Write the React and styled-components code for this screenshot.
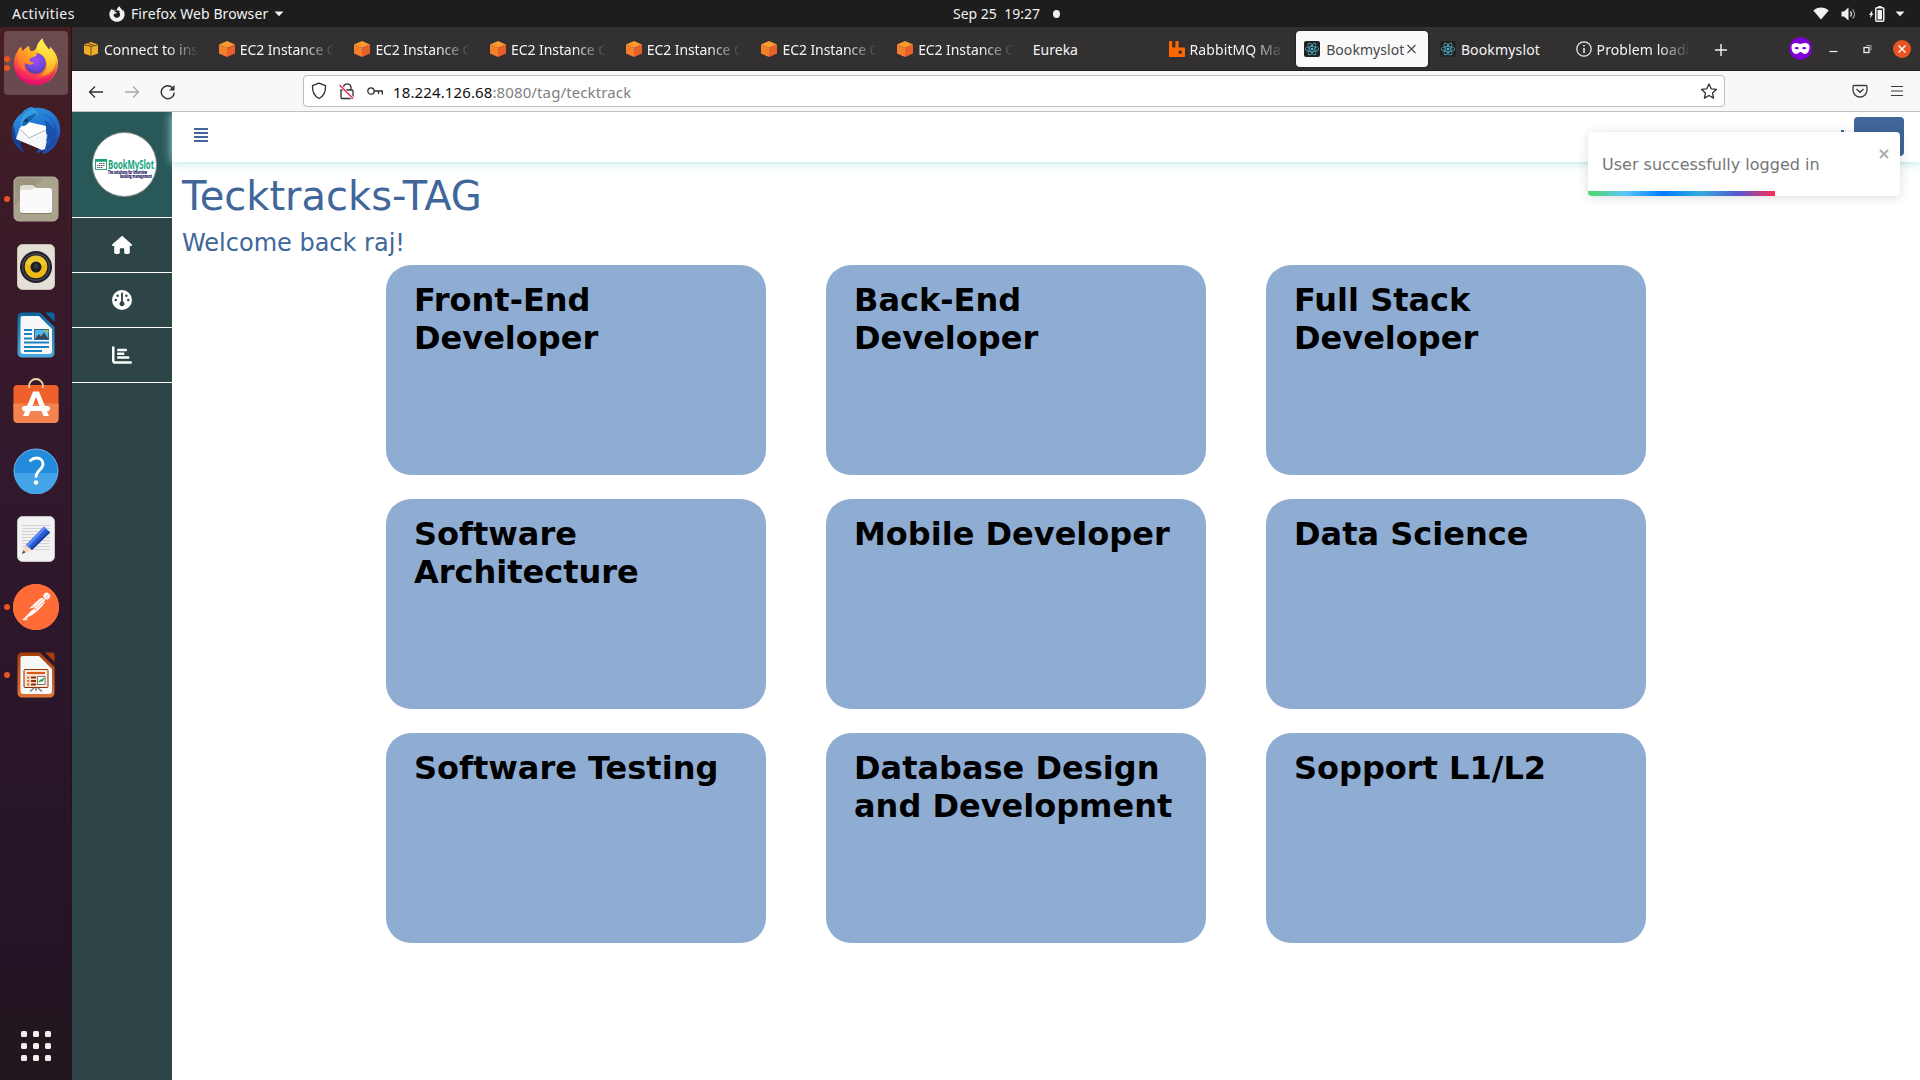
import React from "react";
import styled, { createGlobalStyle, css } from "styled-components";
import { FaHouse, FaGauge, FaChartBar, FaFirefoxBrowser } from "react-icons/fa6";
import { SiPostman, SiRabbitmq, SiReact } from "react-icons/si";

const GlobalStyle = createGlobalStyle`
  * { box-sizing: border-box; }
  body { margin: 0; background: #fff; overflow: hidden; }
  h1, h2, h4, p { margin: 0; }
  svg { display: block; flex: none; }
`;

const uiFont = `"Noto Sans", "Open Sans", sans-serif`;

const Desktop = styled.div`
  width: 1920px;
  height: 1080px;
  display: flex;
  flex-direction: column;
  font-family: ${uiFont};
`;

/* ---------- GNOME top bar ---------- */
const TopBar = styled.header`
  height: 27px;
  flex: none;
  background: #1d1d1d;
  color: #f2f2f2;
  display: grid;
  grid-template-columns: 1fr auto 1fr;
  align-items: center;
  font-size: 14px;
  line-height: 27px;
`;
const TopLeft = styled.div`
  display: flex;
  align-items: center;
  padding-left: 12px;
`;
const TopLabel = styled.span`
  width: ${(p) => p.$w}px;
  letter-spacing: ${(p) => p.$ls || 0}px;
  white-space: nowrap;
`;
const AppMenu = styled.div`
  display: flex;
  align-items: center;
  gap: 6px;
  margin-left: 35px;
`;
const Clock = styled.div`
  display: flex;
  align-items: center;
  gap: 13px;
  padding-left: 93px;
  white-space: pre;
  width: 200px;
`;
const Dot = styled.i`
  width: 8px;
  height: 8px;
  border-radius: 50%;
  background: #f2f2f2;
`;
const Tray = styled.div`
  display: flex;
  align-items: center;
  justify-content: flex-end;
  padding-right: 15px;
`;
const TrayItem = styled.span`
  margin-left: ${(p) => p.$gap}px;
`;

/* ---------- Dock ---------- */
const Body = styled.div`
  flex: 1;
  min-height: 0;
  display: flex;
`;
const Dock = styled.nav`
  width: 72px;
  flex: none;
  padding: 4px 0 2px;
  display: flex;
  flex-direction: column;
  gap: 4px;
  align-items: center;
  background: linear-gradient(180deg, #471e22 0%, #3c1b27 16%, #33182c 38%, #2a162a 65%, #241426 88%, #22161f 95%, #22161f 100%);
  border-right: 1px solid #25121c;
`;
const DockTile = styled.div`
  width: 64px;
  height: 64px;
  flex: none;
  border-radius: 4px;
  display: flex;
  align-items: center;
  justify-content: center;
  position: relative;
  background: ${(p) => (p.$active ? "rgba(255,255,255,0.2)" : "transparent")};
  padding-bottom: ${(p) => p.$lift || 0}px;
`;
const Running = styled.div`
  position: absolute;
  left: 0;
  top: 0;
  height: 100%;
  display: flex;
  flex-direction: column;
  justify-content: center;
  gap: 3px;
`;
const RunDot = styled.i`
  width: 6px;
  height: 6px;
  border-radius: 50%;
  background: #e95420;
`;
const DockSpacer = styled.div`
  flex: 1;
`;
const PostmanBadge = styled.div`
  width: 46px;
  height: 46px;
  border-radius: 50%;
  background: #fff;
  color: #ff6c37;
  border: 1px solid #ff6c37;
  display: flex;
  align-items: center;
  justify-content: center;
`;

/* ---------- Browser chrome ---------- */
const Window = styled.div`
  flex: 1;
  min-width: 0;
  display: flex;
  flex-direction: column;
`;
const TabBar = styled.div`
  height: 44px;
  flex: none;
  background: #333032;
  border-bottom: 1px solid #1f1d1e;
  display: flex;
  align-items: center;
  padding: 0 9px 0 1px;
`;
const Tab = styled.div`
  width: 131.7px;
  height: 36px;
  margin: 0 2px;
  flex: none;
  display: flex;
  align-items: center;
  padding: 0 8px;
  border-radius: 4px;
  color: #f4f4f4;
  font-size: 14px;
  ${(p) =>
    p.$active &&
    css`
      background: #f9f9fa;
      color: #48474a;
      box-shadow: 0 0 3px rgba(0, 0, 0, 0.6);
    `}
`;
const TabIcon = styled.span`
  width: 16px;
  height: 16px;
  margin-right: ${(p) => (p.$active ? 6 : 5)}px;
  flex: none;
  display: flex;
  align-items: center;
  justify-content: center;
`;
const ReactTile = styled.span`
  width: 16px;
  height: 16px;
  border-radius: 2px;
  background: #222;
  color: #53c1de;
  display: flex;
  align-items: center;
  justify-content: center;
`;
const TabLabel = styled.span`
  flex: 1;
  min-width: 0;
  white-space: nowrap;
  line-height: 20px;
  padding-top: 2px;
  letter-spacing: ${(p) => p.$ls || 0}px;
  ${(p) =>
    p.$fade &&
    css`
      mask-image: linear-gradient(90deg, #000 0, #000 calc(100% - 32px), transparent 100%);
    `}
`;
const NewTab = styled.span`
  padding: 2px 0 0 12px;
`;
const WindowControls = styled.div`
  margin-left: auto;
  display: flex;
  align-items: center;
`;
const CloseButton = styled.span`
  width: 18px;
  height: 18px;
  border-radius: 50%;
  background: #e95420;
  display: flex;
  align-items: center;
  justify-content: center;
  margin-left: 18px;
`;
const Toolbar = styled.div`
  height: 41px;
  flex: none;
  background: #f8f8f8;
  border-bottom: 1px solid #c2c2c3;
  display: flex;
  align-items: center;
  padding: 0 16px;
  color: #3a393b;
`;
const NavButtons = styled.div`
  display: flex;
  gap: 20px;
  width: 215px;
  padding-top: 1px;
`;
const UrlBox = styled.div`
  width: 1422px;
  height: 32px;
  background: #fff;
  border: 1px solid #bdbdbf;
  border-radius: 4px;
  display: flex;
  align-items: center;
  padding: 0 6px 0 7px;
  font-size: 15px;
`;
const Url = styled.span`
  margin-left: 9px;
  flex: 1;
  color: #808081;
  line-height: 20px;
  padding-top: 1px;
  letter-spacing: 0.12px;
`;
const Host = styled.span`
  color: #111;
`;
const ToolbarEnd = styled.div`
  margin-left: auto;
  display: flex;
  align-items: center;
  gap: 22px;
`;

/* ---------- Page ---------- */
const Page = styled.div`
  flex: 1;
  min-height: 0;
  display: flex;
  overflow: hidden;
  position: relative;
  font-family: "DejaVu Sans", sans-serif;
`;
const Sidebar = styled.aside`
  width: 100px;
  flex: none;
  background: #2d4546;
`;
const LogoBox = styled.div`
  height: 106px;
  background: #285858;
  border-bottom: 1px solid #fff;
  padding: 20px 0 0 20px;
`;
const SideItem = styled.div`
  height: 55px;
  border-bottom: 1px solid #fff;
  color: #fff;
  display: flex;
  align-items: center;
  justify-content: center;
  font-size: 20px;
`;
const Main = styled.main`
  flex: 1;
  min-width: 0;
`;
const Header = styled.div`
  height: 50px;
  background: #fff;
  box-shadow: 0 0 10px #a3dfdd;
  position: relative;
  display: flex;
  justify-content: space-between;
  padding: 5px 16px 0 22px;
`;
const MenuIcon = styled.div`
  padding-top: 11px;
`;
const HeaderRight = styled.div`
  display: flex;
  gap: 10px;
`;
const NameMark = styled.i`
  width: 3px;
  height: 3px;
  margin-top: 13px;
  background: #40669a;
`;
const HeaderButton = styled.div`
  width: 50px;
  height: 39px;
  border-radius: 4px;
  background: #40669a;
`;
const Titles = styled.div`
  padding: 10px 10px 0;
  color: #40669a;
`;
const Title = styled.h1`
  font-size: 40px;
  line-height: 48px;
  font-weight: 400;
`;
const Welcome = styled.h4`
  margin-top: 9px;
  font-size: 24px;
  line-height: 29px;
  font-weight: 400;
`;
const Grid = styled.div`
  display: grid;
  grid-template-columns: repeat(3, 380px);
  grid-auto-rows: 210px;
  gap: 24px 60px;
  padding: 7px 0 0 214px;
`;
const Card = styled.section`
  background: #8facd3;
  border-radius: 25px;
  padding: 16px 25px 16px 28px;
`;
const CardTitle = styled.h2`
  font-size: 32px;
  line-height: 38px;
  font-weight: 700;
  color: #000;
`;
const Toast = styled.div`
  position: absolute;
  top: 20px;
  right: 20px;
  width: 312px;
  height: 64px;
  background: #fff;
  border-radius: 4px;
  overflow: hidden;
  display: flex;
  justify-content: space-between;
  padding: 0 10px 0 14px;
  color: #757575;
  font-size: 16px;
  line-height: 66px;
  box-shadow: 0 1px 10px rgba(0, 0, 0, 0.1), 0 2px 15px rgba(0, 0, 0, 0.05);
`;
const ToastClose = styled.span`
  padding-top: 17px;
`;
const Progress = styled.div`
  position: absolute;
  left: 0;
  bottom: 0;
  width: 187px;
  height: 5px;
  background: linear-gradient(90deg, #4cd964, #5ac8fa, #007aff, #34aadc, #5856d6, #ff2d55);
`;

/* ---------- Drawings ---------- */
const Caret = () => (
  <svg width="10" height="6" viewBox="0 0 10 6"><path d="M0.5 0.5h9L5 5.3z" fill="#f2f2f2" /></svg>
);

const FirefoxIcon = () => (
  <svg width="46" height="48" viewBox="0 0 46 48">
    <defs>
      <linearGradient id="fxBody" x1="0.75" y1="0.05" x2="0.3" y2="0.95">
        <stop offset="0" stopColor="#fff04a" />
        <stop offset="0.3" stopColor="#ffc42c" />
        <stop offset="0.52" stopColor="#ff8a27" />
        <stop offset="0.75" stopColor="#ff4448" />
        <stop offset="1" stopColor="#e5126f" />
      </linearGradient>
      <linearGradient id="fxHead" x1="0.8" y1="0" x2="0.2" y2="1">
        <stop offset="0" stopColor="#ffc928" />
        <stop offset="0.5" stopColor="#ff9225" />
        <stop offset="1" stopColor="#ff5d35" />
      </linearGradient>
      <radialGradient id="fxGlobe" cx="0.5" cy="0.35" r="0.7">
        <stop offset="0" stopColor="#a24df5" />
        <stop offset="0.6" stopColor="#6d48dc" />
        <stop offset="1" stopColor="#4b3b9f" />
      </radialGradient>
      <linearGradient id="fxTail" x1="0.6" y1="0" x2="0.5" y2="1">
        <stop offset="0" stopColor="#fff45c" />
        <stop offset="0.55" stopColor="#ffd432" />
        <stop offset="1" stopColor="#ff9c23" />
      </linearGradient>
    </defs>
    <path d="M23 10.500c2-4 3.500-7.500 6.500-10 .5 4 4 7 6.500 11 .8-.5 1-1.500 1-3 5 5 8.500 11 8 18C44 39 34 47 23 47 11 47 1.500 38 1 27c-.2-6 1-11 4-14 .5-1.500 1.500-3 3-4 .3 2 1 3 2 4 1.500-2.200 3.500-4 6-5 0 2 .5 4 2 5 1.500.3 3.500 0 5-2.500z" fill="url(#fxBody)" />
    <path d="M1 27c3 14 16 18 27 13 8-3 13-8 15-17l2 4C44 39 34 47 23 47 11 47 1.500 38 1 27z" fill="#e51572" opacity="0.3" />
    <path d="M2 31c4 10 14 13 23 11 9-1 15-6 18-12-2 10-10 17-20 17C13 47 4 41 2 31z" fill="#dd0f70" opacity="0.6" />
    <circle cx="22.500" cy="25.500" r="10.500" fill="url(#fxGlobe)" />
    <path d="M29.500.5c-5 4-8 10-3.500 14 4 3 8 5 8 12 0 6-3 9-7 11 9 0 15-6 15.500-13 .3-5-1.500-8-4.500-12 0 1-.5 2-1.500 2C35 9 30 6 29.500.5z" fill="url(#fxTail)" />
    <path d="M5 14c0-2 1-4 3-5l2 5c1-2.500 3-4.500 6-6 0 2 .5 5 3 6.500 2 .5 3 .3 4.500.8.8 1.200 0 2.500-2 3.500-2 .8-4 1-5 2 0 3 2 4 5 4-3 3-8 2-10 0-1 3 0 7 2 9-6-2-9-6-9-13z" fill="url(#fxHead)" />
  </svg>
);

const ThunderbirdIcon = () => (
  <svg width="50" height="50" viewBox="0 0 50 50">
    <defs>
      <linearGradient id="tbBlue" x1="0.3" y1="0" x2="0.7" y2="1">
        <stop offset="0" stopColor="#2f93df" />
        <stop offset="0.5" stopColor="#1f6fd0" />
        <stop offset="1" stopColor="#2447a8" />
      </linearGradient>
    </defs>
    <path d="M20 1c2 0 3 1 4 1 10-1 19 4 23 12 3 7 3 14 0 20-2 6-7 11-13 14l-3-1 3-3-8 3c-2 0 2-4 4-6L9 35c0 4 2 8 4 11C5 42 1 34 1 26c0-8 4-15 10-19 2-3 5-5 9-6z" fill="url(#tbBlue)" />
    <path d="M1 25c0 10 4 17 12 21-2-3-4-7-4-11L5 32 3 20c-1 1-2 3-2 5z" fill="#173f97" />
    <path d="M8 24l26 3 3 2-3 14-3 1L5 33z" fill="#f5f6f8" />
    <path d="M13 15l22 5v9l-18 3L8 24z" fill="#fff" />
    <path d="M8 22l10 10 17-8" fill="none" stroke="#a9b1ba" strokeWidth="1" />
    <path d="M9 20c0-8 5-15 13-17 3 1 5 2 5 5-3 2-7 4-9 7-2 4-5 6-9 5z" fill="#369ee0" />
    <path d="M11 19c2-7 6-9 15-12-3 4-5 6-8 9-2 3-4 4-7 3z" fill="#1764a5" />
    <circle cx="15" cy="14.500" r="1.500" fill="#102e50" />
    <path d="M27 7c9 1 16 7 17 17-3-5-7-8-11-10 2 5 4 13 2 21 3-1 4-2 6-4-1 6-4 10-7 13 7-2 12-7 14-14-1 1-2 2-3 2 2-7 0-14-4-18-3-4-8-7-14-7z" fill="#174aa3" opacity="0.7" />
  </svg>
);

const FilesIcon = () => (
  <svg width="46" height="46" viewBox="0 0 46 46">
    <rect x="1" y="1" width="44" height="44" rx="5" fill="#9c9581" stroke="#b9b4a2" />
    <path d="M1 30L32 1h8a5 5 0 0 1 5 5v34a5 5 0 0 1-5 5H6a5 5 0 0 1-5-5z" fill="#aaa48f" />
    <path d="M7 12a3 3 0 0 1 3-3h9c2 0 3 3 5 3h12v10H7z" fill="#e1ddcf" />
    <path d="M7 16a2 2 0 0 1 2-2h8c2 0 3-2 5-2h14a3 3 0 0 1 3 3v19a3 3 0 0 1-3 3H10a3 3 0 0 1-3-3z" fill="#fafafa" />
    <path d="M8 37.500h30" stroke="#857e6c" strokeWidth="1" />
  </svg>
);

const SpeakerIcon = () => (
  <svg width="38" height="46" viewBox="0 0 38 46">
    <rect x="0.500" y="0.500" width="37" height="45" rx="5" fill="#e5e0d5" stroke="#c9c3b6" />
    <circle cx="19" cy="23" r="16" fill="#20202c" />
    <circle cx="19" cy="23" r="14" fill="#454553" />
    <circle cx="19" cy="23" r="12.500" fill="#171719" />
    <circle cx="19" cy="23" r="11.300" fill="#ecba16" />
    <path d="M8 20a11.300 11.300 0 0 1 22 0L19 23z" fill="#f5d142" opacity="0.65" />
    <circle cx="19" cy="23" r="5.500" fill="#1c1f22" />
    <circle cx="19" cy="22" r="2.500" fill="#36393c" />
  </svg>
);

const DocShell = ({ id, dark, light, children }) => (
  <svg width="38" height="46" viewBox="0 0 38 46">
    <defs>
      <linearGradient id={id} x1="0" y1="0" x2="0" y2="1">
        <stop offset="0" stopColor={dark} />
        <stop offset="1" stopColor={light} />
      </linearGradient>
    </defs>
    <path d="M5 .5h18L37.500 15v26a4.500 4.500 0 0 1-4.500 4.500H5A4.500 4.500 0 0 1 .5 41V5A4.500 4.500 0 0 1 5 .5z" fill={`url(#${id})`} />
    <path d="M28 .5h7.500a2 2 0 0 1 2 2V10z" fill={dark} />
    <path d="M5.500 4H22l13 13v22a3 3 0 0 1-3 3H6.500a3 3 0 0 1-3-3V6a2 2 0 0 1 2-2z" fill="#f8f8f8" />
    {children}
  </svg>
);

const WriterIcon = () => (
  <DocShell id="wr" dark="#0d639d" light="#4aa9dc">
    <path d="M7 18h8M7 22h8M7 26.500h8M7 30.500h25M7 35h25M7 39h18" stroke="#1a82c4" strokeWidth="1.800" />
    <rect x="17.500" y="17.500" width="14" height="10" fill="#53b5e5" stroke="#226aa0" />
    <path d="M18 27l4-5 2 2.500 3-4 4.500 6.500z" fill="#3c4650" />
    <path d="M27.500 18h4v3z" fill="#e9b620" />
  </DocShell>
);

const ImpressIcon = () => (
  <DocShell id="im" dark="#a53e0b" light="#e07337">
    <rect x="7" y="17.500" width="24" height="18" rx="1" fill="#fbe3d3" stroke="#8d3306" />
    <path d="M10 21h18" stroke="#d9591b" strokeWidth="2" />
    <path d="M10 25.500h2.500M10 29h2.500M10 32.500h2.500" stroke="#e07337" strokeWidth="2" />
    <path d="M14 25.500h5M14 29h5M14 32.500h5" stroke="#8d2f05" strokeWidth="2" />
    <rect x="20.500" y="24.500" width="7.500" height="8" fill="#fff" stroke="#7b7b7b" />
    <path d="M22 30l2-2 1 1 2-3" stroke="#2f9e3c" strokeWidth="1.500" fill="none" />
    <path d="M17 36l-4 3.500M21 36l4 3.500M19 36v3" stroke="#7d7d7d" strokeWidth="1.500" />
  </DocShell>
);

const SoftwareIcon = () => (
  <svg width="46" height="46" viewBox="0 0 46 46">
    <rect x="0.500" y="7" width="45" height="37.500" rx="4" fill="#f0602a" />
    <path d="M.5 25.500h45V41a4 4 0 0 1-4 4h-37a4 4 0 0 1-4-4z" fill="#f38450" />
    <path d="M16 10V8a7 7 0 0 1 14 0v2" fill="none" stroke="#f3d9a8" strokeWidth="1.800" />
    <path d="M20 13.500h6L36 38h-5.500L23 19l-7.500 19H10z" fill="#fff" />
    <rect x="9" y="28" width="28" height="5" rx="2.500" fill="#fff" />
  </svg>
);

const HelpIcon = () => (
  <svg width="46" height="46" viewBox="0 0 46 46">
    <circle cx="23" cy="23" r="22" fill="#238bdb" stroke="#6fbaf0" />
    <path d="M1.500 25h43a21.500 21.500 0 0 1-43 0z" fill="#43a3e6" />
    <path d="M17.500 12.500c2-2 4-2.500 6-2.500 4 0 6.500 2.500 6.500 6 0 6-7 6.500-7 12.500" fill="none" stroke="#fff" strokeWidth="2.800" strokeLinecap="round" />
    <circle cx="23" cy="34.500" r="2.300" fill="#fff" />
  </svg>
);

const EditorIcon = () => (
  <svg width="38" height="46" viewBox="0 0 38 46">
    <rect x="0.500" y="0.500" width="37" height="45" rx="5" fill="#f2f2f2" stroke="#c6c6c6" />
    <path d="M5 9.500h28M5 12.500h28M5 15.500h28M5 18.500h28M5 21.500h28M5 24.500h28M5 27.500h28M5 30.500h28M5 33.500h28" stroke="#d2d2d2" />
    <path d="M5 38l4-9 6 5z" fill="#f7d9b4" />
    <path d="M5 38l1.500-3.500 2 1.800z" fill="#333" />
    <path d="M9 29L27 10.500l6 6L15 34z" fill="#2a5bd8" />
    <path d="M9 29L27 10.500l2 2L11 31z" fill="#5d8cf0" />
    <path d="M13.500 32.500L31.500 15l1.500 1.500L15 34z" fill="#1c419f" />
  </svg>
);

const AppsIcon = () => (
  <svg width="30" height="30" viewBox="0 0 30 30" fill="#f1f0ee">
    {[0, 12, 24].flatMap((y) => [0, 12, 24].map((x) => <rect key={`${x}-${y}`} x={x} y={y} width="6" height="6" rx="1.500" />))}
  </svg>
);

const AwsBox = () => (
  <svg width="14" height="14" viewBox="0 0 14 14">
    <path d="M0 2.500L7 0l7 2.500v9L7 14l-7-2.500z" fill="#efac28" />
    <path d="M0 2.800l7 1.700 7-1.700M7 4.500V14M3.500 1.500l7 2" stroke="#59431b" strokeWidth="0.900" fill="none" />
  </svg>
);

const Ec2Cube = () => (
  <svg width="16" height="16" viewBox="0 0 16 16">
    <path d="M8 0l8 3.500L8 7 0 3.500z" fill="#fb9a2e" />
    <path d="M0 3.500L8 7v9l-8-3.500z" fill="#f5802a" />
    <path d="M16 3.500L8 7v9l8-3.500z" fill="#e8602a" />
  </svg>
);

const InfoCircle = () => (
  <svg width="16" height="16" viewBox="0 0 16 16" fill="none" stroke="#f4f4f4">
    <circle cx="8" cy="8" r="7.200" strokeWidth="1.200" />
    <path d="M8 7v5M8 4v1.500" strokeWidth="1.500" />
  </svg>
);

const LogoIcon = () => (
  <svg width="65" height="65" viewBox="0 0 65 65">
    <circle cx="32.500" cy="32.500" r="32" fill="#fff" stroke="#8f8f8f" />
    <rect x="3.500" y="27.500" width="11" height="10" fill="#fff" stroke="#2ba27f" />
    <path d="M3 28.500h12" stroke="#11a07a" strokeWidth="2.500" />
    <path d="M7 31.500h6M5 33.500h8M5 35.500h6" stroke="#5c5c66" strokeWidth="1.200" strokeDasharray="1.500 0.500" />
    <text x="16" y="37" fontFamily="Open Sans, sans-serif" fontWeight="700" fontSize="12.500" fill="#14a37c" textLength="46" lengthAdjust="spacingAndGlyphs">BookMySlot</text>
    <text x="16" y="41.500" fontFamily="Open Sans, sans-serif" fontWeight="700" fontSize="4.500" fill="#1c1c66" stroke="#1c1c66" strokeWidth="0.200" textLength="39" lengthAdjust="spacingAndGlyphs">The solutions for interview</text>
    <text x="28" y="45.800" fontFamily="Open Sans, sans-serif" fontWeight="700" fontSize="4.500" fill="#1c1c66" stroke="#1c1c66" strokeWidth="0.200" textLength="32" lengthAdjust="spacingAndGlyphs">booking management</text>
  </svg>
);

const WifiIcon = () => (
  <svg width="16" height="13" viewBox="0 0 16 13"><path d="M.3 3.500C4.500-.4 11.500-.4 15.700 3.500L8 12.500z" fill="#f2f2f2" /></svg>
);
const VolumeIcon = () => (
  <svg width="16" height="14" viewBox="0 0 16 14">
    <path d="M.5 4.500H3L7.500.5v13L3 9.500H.5z" fill="#f2f2f2" />
    <path d="M9.300 4.500a3.500 3.500 0 0 1 0 5" stroke="#f2f2f2" fill="none" strokeWidth="1.200" />
    <path d="M11.500 2.500a6 6 0 0 1 0 9" stroke="#9b9b9b" fill="none" strokeWidth="1.200" />
  </svg>
);
const BatteryIcon = () => (
  <svg width="16" height="16" viewBox="0 0 16 16">
    <path d="M3.500 4L0 9h1.800L1 12.500 4.500 7.500H2.800z" fill="#f2f2f2" />
    <rect x="6.750" y="1.750" width="8" height="13.500" rx="1" fill="none" stroke="#f2f2f2" strokeWidth="1.500" />
    <rect x="9" y="0" width="3.500" height="2" fill="#f2f2f2" />
    <rect x="8.500" y="4" width="4.500" height="9.500" fill="#f2f2f2" />
  </svg>
);

const MaskIcon = () => (
  <svg width="23" height="23" viewBox="0 0 23 23">
    <circle cx="11.500" cy="11.500" r="11.300" fill="#8000d7" />
    <path d="M2.500 10c0-3 2-4 4.500-4 2 0 3 .9 4.500.9S14 6 16 6c2.500 0 4.500 1 4.500 4 0 4-2 7-4.500 7-2 0-3-2-4.500-2s-2.500 2-4.500 2c-2.500 0-4.500-3-4.500-7z" fill="#fff" />
    <path d="M5.500 11.200c1-1.700 3.500-1.700 4.500 0-1 1.500-3.500 1.500-4.500 0zM13 11.200c1-1.700 3.500-1.700 4.500 0-1 1.500-3.500 1.500-4.500 0z" fill="#8000d7" />
  </svg>
);

const dockItems = [
  { icon: <FirefoxIcon />, dots: 2, active: true, lift: 2 },
  { icon: <ThunderbirdIcon /> },
  { icon: <FilesIcon />, dots: 1 },
  { icon: <SpeakerIcon /> },
  { icon: <WriterIcon /> },
  { icon: <SoftwareIcon />, lift: 4 },
  { icon: <HelpIcon /> },
  { icon: <EditorIcon /> },
  { icon: <PostmanBadge><SiPostman size={46} /></PostmanBadge>, dots: 1 },
  { icon: <ImpressIcon />, dots: 1 },
];

const reactTile = <ReactTile><SiReact size={14} /></ReactTile>;
const ec2 = { icon: <Ec2Cube />, label: "EC2 Instance C", fade: true, ls: -0.08 };
const tabs = [
  { icon: <AwsBox />, label: "Connect to ins", fade: true },
  ec2, ec2, ec2, ec2, ec2, ec2,
  { label: "Eureka" },
  { icon: <SiRabbitmq size={16} color="#ff6600" />, label: "RabbitMQ Ma", fade: true, ls: 0.1 },
  { icon: reactTile, label: "Bookmyslot", active: true, ls: 0.05 },
  { icon: reactTile, label: "Bookmyslot", ls: 0.15 },
  { icon: <InfoCircle />, label: "Problem loadi", fade: true, ls: 0.1 },
];

const cards = [
  "Front-End Developer", "Back-End Developer", "Full Stack Developer",
  "Software Architecture", "Mobile Developer", "Data Science",
  "Software Testing", "Database Design and Development", "Sopport L1/L2",
];

export default function App() {
  return (
    <Desktop>
      <GlobalStyle />
      <TopBar>
        <TopLeft>
          <TopLabel $w={62} $ls={0.45}>Activities</TopLabel>
          <AppMenu>
            <FaFirefoxBrowser size={16} />
            <TopLabel $w={137} $ls={0.1}>Firefox Web Browser</TopLabel>
            <Caret />
          </AppMenu>
        </TopLeft>
        <Clock>{"Sep 25  19:27"}<Dot /></Clock>
        <Tray>
          <TrayItem><WifiIcon /></TrayItem>
          <TrayItem $gap={12}><VolumeIcon /></TrayItem>
          <TrayItem $gap={12}><BatteryIcon /></TrayItem>
          <TrayItem $gap={10}><Caret /></TrayItem>
        </Tray>
      </TopBar>
      <Body>
        <Dock>
          {dockItems.map((d, i) => (
            <DockTile key={i} $active={d.active} $lift={d.lift}>
              <Running>{Array.from({ length: d.dots || 0 }, (_, k) => <RunDot key={k} />)}</Running>
              {d.icon}
            </DockTile>
          ))}
          <DockSpacer />
          <DockTile><AppsIcon /></DockTile>
        </Dock>
        <Window>
          <TabBar>
            {tabs.map((t, i) => (
              <Tab key={i} $active={t.active}>
                {t.icon && <TabIcon $active={t.active}>{t.icon}</TabIcon>}
                <TabLabel $fade={t.fade} $ls={t.ls}>{t.label}</TabLabel>
                {t.active && (
                  <svg width="14" height="12" viewBox="0 0 14 12"><path d="M1.500 2l8 8M9.500 2l-8 8" stroke="#48474a" strokeWidth="1.100" /></svg>
                )}
              </Tab>
            ))}
            <NewTab>
              <svg width="16" height="16" viewBox="0 0 16 16"><path d="M8 2v12M2 8h12" stroke="#f4f4f4" strokeWidth="1.400" /></svg>
            </NewTab>
            <WindowControls>
              <MaskIcon />
              <svg width="63" height="16" viewBox="0 0 63 16" fill="none">
                <path d="M17.500 10.500h8" stroke="#f2f2f2" strokeWidth="1.200" />
                <rect x="52" y="6.500" width="5" height="5" stroke="#f2f2f2" strokeWidth="1.300" />
                <path d="M54.500 4.500h4.500v5" stroke="#a5a4a5" />
              </svg>
              <CloseButton>
                <svg width="10" height="10" viewBox="0 0 10 10"><path d="M1.500 1.500l7 7M8.500 1.500l-7 7" stroke="#fff" strokeWidth="1.400" /></svg>
              </CloseButton>
            </WindowControls>
          </TabBar>
          <Toolbar>
            <NavButtons>
              <svg width="16" height="16" viewBox="0 0 16 16" fill="none" stroke="#2f2e31" strokeWidth="1.300"><path d="M15 8H1.500M7 2.500L1.500 8 7 13.500" /></svg>
              <svg width="16" height="16" viewBox="0 0 16 16" fill="none" stroke="#a9a9aa" strokeWidth="1.300"><path d="M1 8h13.500M9 2.500L14.500 8 9 13.500" /></svg>
              <svg width="16" height="16" viewBox="0 0 16 16" fill="none" stroke="#2f2e31" strokeWidth="1.400"><path d="M14.300 8.500a6.500 6.500 0 1 1-2-5" /><path d="M14.500 1v5.500H9z" fill="#2f2e31" stroke="none" /></svg>
            </NavButtons>
            <UrlBox>
              <svg width="16" height="18" viewBox="0 0 16 18" fill="none" stroke="#2f2e31" strokeWidth="1.300"><path d="M8 1.200l6.500 2.500C14.800 10 12 14.500 8 16.500 4 14.500 1.200 10 1.500 3.700z" strokeLinejoin="round" /></svg>
              <svg width="40" height="18" viewBox="0 0 40 18" fill="none">
                <path d="M16.500 7.500V5a3.800 3.800 0 0 1 7.500 0v2.500M14.500 8h10.500a1 1 0 0 1 1 1v6.500a1 1 0 0 1-1 1H15a1 1 0 0 1-1-1V8z" stroke="#2f2e31" strokeWidth="1.300" />
                <path d="M12.500 3l14 14" stroke="#fff" strokeWidth="3" />
                <path d="M12.500 3L26 16.500" stroke="#e22850" strokeWidth="1.400" />
              </svg>
              <svg width="17" height="16" viewBox="0 0 17 16" fill="none" stroke="#2f2e31" strokeWidth="1.300"><circle cx="4" cy="8" r="3.200" /><path d="M7.200 8h8.800M11.500 8v3M15.300 8v3.500" /></svg>
              <Url><Host>18.224.126.68</Host>:8080/tag/tecktrack</Url>
              <svg width="18" height="18" viewBox="0 0 18 18" fill="none" stroke="#2f2e31" strokeWidth="1.300" strokeLinejoin="round"><path d="M9 2l2.200 4.800 5.200.6-3.900 3.500 1.100 5.200L9 13.500l-4.600 2.600 1.100-5.200L1.600 7.400l5.200-.6z" /></svg>
            </UrlBox>
            <ToolbarEnd>
              <svg width="16" height="14" viewBox="0 0 16 14" fill="none" stroke="#3a393b" strokeWidth="1.300"><path d="M2 1.500h12a1 1 0 0 1 1 1V6A7 7 0 0 1 1 6V2.500a1 1 0 0 1 1-1zM4.500 5L8 8.300 11.500 5" /></svg>
              <svg width="14" height="12" viewBox="0 0 14 12"><path d="M1 1.500h12M1 6h12M1 10.500h12" stroke="#3a393b" strokeWidth="1.200" /></svg>
            </ToolbarEnd>
          </Toolbar>
          <Page>
            <Sidebar>
              <LogoBox><LogoIcon /></LogoBox>
              <SideItem><FaHouse /></SideItem>
              <SideItem><FaGauge /></SideItem>
              <SideItem><FaChartBar /></SideItem>
            </Sidebar>
            <Main>
              <Header>
                <MenuIcon>
                  <svg width="14" height="14" viewBox="0 0 14 14"><path d="M0 1h14M0 5h14M0 9h14M0 13h14" stroke="#40669a" strokeWidth="2" /></svg>
                </MenuIcon>
                <HeaderRight><NameMark /><HeaderButton /></HeaderRight>
              </Header>
              <Titles>
                <Title>Tecktracks-TAG</Title>
                <Welcome>Welcome back raj!</Welcome>
              </Titles>
              <Grid>
                {cards.map((c) => (
                  <Card key={c}><CardTitle>{c}</CardTitle></Card>
                ))}
              </Grid>
            </Main>
            <Toast>
              <span>User successfully logged in</span>
              <ToastClose>
                <svg width="12" height="10" viewBox="0 0 12 10"><path d="M2 1l8 8M10 1L2 9" stroke="#b0b0b0" strokeWidth="2.200" /></svg>
              </ToastClose>
              <Progress />
            </Toast>
          </Page>
        </Window>
      </Body>
    </Desktop>
  );
}
